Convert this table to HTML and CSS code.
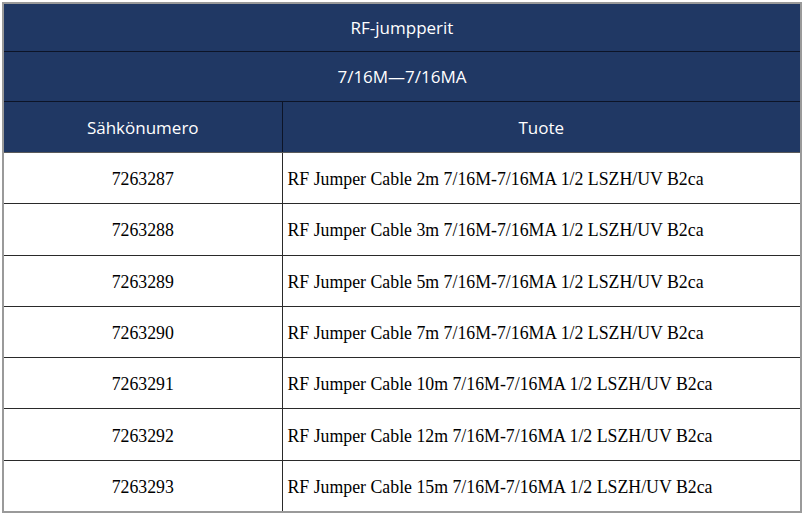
FILE: index.html
```html
<!DOCTYPE html>
<html>
<head>
<meta charset="utf-8">
<link rel="stylesheet" href="styles.css">
</head>
<body>
<table class="tbl">
  <colgroup><col class="c1"><col class="c2"></colgroup>
  <thead>
    <tr class="first"><th colspan="2" class="title">RF-jumpperit</th></tr>
    <tr class="second"><th colspan="2" class="title">7/16M—7/16MA</th></tr>
    <tr class="last"><th>Sähkönumero</th><th>Tuote</th></tr>
  </thead>
  <tbody>
    <tr><td class="num">7263287</td><td class="prod">RF Jumper Cable 2m 7/16M-7/16MA 1/2 LSZH/UV B2ca</td></tr>
    <tr><td class="num">7263288</td><td class="prod">RF Jumper Cable 3m 7/16M-7/16MA 1/2 LSZH/UV B2ca</td></tr>
    <tr><td class="num">7263289</td><td class="prod">RF Jumper Cable 5m 7/16M-7/16MA 1/2 LSZH/UV B2ca</td></tr>
    <tr><td class="num">7263290</td><td class="prod">RF Jumper Cable 7m 7/16M-7/16MA 1/2 LSZH/UV B2ca</td></tr>
    <tr><td class="num">7263291</td><td class="prod">RF Jumper Cable 10m 7/16M-7/16MA 1/2 LSZH/UV B2ca</td></tr>
    <tr><td class="num">7263292</td><td class="prod">RF Jumper Cable 12m 7/16M-7/16MA 1/2 LSZH/UV B2ca</td></tr>
    <tr><td class="num">7263293</td><td class="prod">RF Jumper Cable 15m 7/16M-7/16MA 1/2 LSZH/UV B2ca</td></tr>
  </tbody>
</table>
</body>
</html>
```
FILE: styles.css
```css
html, body { margin: 0; padding: 0; background: #ffffff; }
body { padding: 2px 0 0 2px; }
.tbl {
  border-collapse: collapse;
  width: 800px;
  border: 2px solid #9a9a9a;
  table-layout: fixed;
}
.tbl .c1 { width: 279px; }
.tbl .c2 { width: auto; }
.tbl th {
  background: #203864;
  color: #ffffff;
  font-family: "Open Sans", "Noto Sans", sans-serif;
  font-weight: normal;
  font-size: 17px;
  height: 50px;
  padding: 0;
  border: 1px solid #0c1427;
  text-align: center;
  vertical-align: middle;
}
.tbl tr.first th { height: 47px; }
.tbl tr.second th { height: 49px; }
.tbl tr.last th { border-bottom: 1px solid #5a5a5a; }
.tbl td {
  font-family: "Liberation Serif", "Times New Roman", serif;
  font-size: 17.8px;
  color: #000000;
  height: 47.3px;
  padding: 3px 0 0 0;
  border: 1px solid #2a2a2a;
  vertical-align: middle;
}
.tbl td.num { text-align: center; }
.tbl td.prod { text-align: left; padding-left: 5px; }
```
